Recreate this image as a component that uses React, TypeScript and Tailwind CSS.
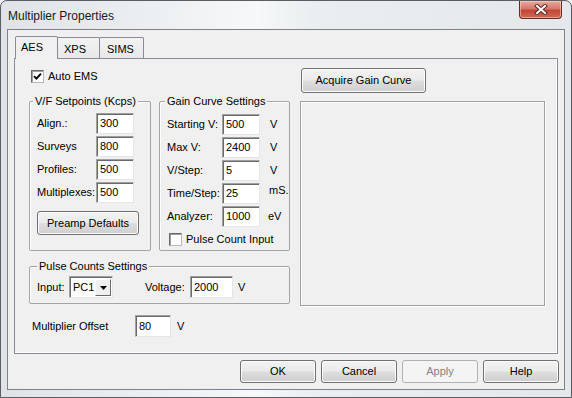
import React from 'react';

function Check({ checked = false }: { checked?: boolean }) {
  return (
    <span className="w-[13px] h-[13px] shrink-0 bg-white border border-t-[#6a6a6a] border-l-[#6a6a6a] border-b-[#b8b8b8] border-r-[#b8b8b8] shadow-[inset_1px_1px_0_#a0a0a0] flex items-center justify-center">
      {checked && (
        <svg width="9" height="9" viewBox="0 0 9 9">
          <path d="M1 4.2 L3.4 6.6 L8 1.6" stroke="#000" strokeWidth="1.9" fill="none" />
        </svg>
      )}
    </span>
  );
}

function TextBox({ value, className = '' }: { value: string; className?: string }) {
  return (
    <div
      className={`bg-white border border-t-[#a0a0a0] border-l-[#a0a0a0] border-b-[#e6e6e6] border-r-[#e6e6e6] shadow-[inset_1px_1px_0_#6a6a6a] pl-[3px] flex items-center ${className}`}
    >
      {value}
    </div>
  );
}

function Btn({
  children,
  className = '',
  disabled = false,
}: {
  children: React.ReactNode;
  className?: string;
  disabled?: boolean;
}) {
  if (disabled) {
    return (
      <button className={`border border-[#adb2b5] rounded-[3px] bg-[#f4f4f4] text-[#838383] flex items-center justify-center ${className}`}>
        {children}
      </button>
    );
  }
  return (
    <button
      className={`border border-[#707070] rounded-[3px] bg-[linear-gradient(#f2f2f2_0%,#ebebeb_48%,#dddddd_52%,#cfcfcf_100%)] shadow-[inset_0_0_0_1px_#fcfcfc] text-black flex items-center justify-center ${className}`}
    >
      {children}
    </button>
  );
}

function Row({ label, value, labelW, unit }: { label: string; value: string; labelW: string; unit?: React.ReactNode }) {
  return (
    <div className="flex items-center h-[21px]">
      <span className={labelW}>{label}</span>
      <TextBox value={value} className="w-[38px] h-[21px]" />
      {unit}
    </div>
  );
}

export default function App() {
  return (
    <div className="w-[572px] h-[398px] overflow-hidden bg-[#f0f0f0]">
      <div className="w-[572px] h-[398px] flex flex-col border border-[#5a5e63] rounded-t-[7px] bg-[linear-gradient(90deg,#dfe3e7_0%,#eef1f3_30%,#f6f8f9_45%,#e9eef0_55%,#e4e8eb_100%)] font-['Liberation_Sans',Arial,sans-serif] text-[11px] leading-[13px] text-black">
        {/* title bar */}
        <div className="h-[28px] flex items-start justify-between shrink-0">
          <span className="text-[12px] leading-[14px] mt-[8px] ml-[7px] text-[#1a1a1a]">Multiplier Properties</span>
          <div className="w-[43px] h-[18px] mr-[9px] rounded-b-[4px] border border-t-0 border-[#6b2a24] bg-[linear-gradient(#e9a99f_0%,#d8776b_45%,#c44536_55%,#d06a58_100%)] shadow-[inset_0_0_0_1px_rgba(255,220,210,0.5)] flex items-center justify-center">
            <svg width="14" height="11" viewBox="0 0 14 11">
              <path d="M3 2 L11 9 M11 2 L3 9" stroke="#5a2b26" strokeWidth="4" strokeLinecap="square" />
              <path d="M3 2 L11 9 M11 2 L3 9" stroke="#fff" strokeWidth="2" strokeLinecap="square" />
            </svg>
          </div>
        </div>

        {/* client area */}
        <div className="ml-[6px] w-[558px] h-[361px] border border-[#7d8288] bg-[#f0f0f0] flex flex-col">
          {/* tabs */}
          <div className="mt-[6px] ml-[7px] flex items-end h-[22px] relative z-10">
            <div className="w-[43px] h-[23px] -mb-px border border-b-0 border-[#898c95] rounded-t-[2px] bg-[#f0f0f0] pl-[5px] pt-[4px]">AES</div>
            <div className="w-[43px] h-[21px] -ml-px border border-b-0 border-[#898c95] rounded-t-[2px] bg-[linear-gradient(#f3f3f3,#e8e8e8)] pl-[6px] pt-[5px]">XPS</div>
            <div className="w-[45px] h-[21px] -ml-px border border-b-0 border-[#898c95] rounded-t-[2px] bg-[linear-gradient(#f3f3f3,#e8e8e8)] pl-[7px] pt-[5px]">SIMS</div>
          </div>

          {/* tab panel */}
          <div className="ml-[6px] w-[544px] h-[296px] border border-[#898c95] shadow-[inset_-1px_-1px_0_#ffffff] bg-[#f0f0f0] flex pt-[9px] pl-[14px]">
            {/* left column */}
            <div className="w-[261px] flex flex-col">
              <div className="h-[16px] flex items-center ml-[2px]">
                <Check checked />
                <span className="ml-[4px]">Auto EMS</span>
              </div>

              <div className="flex mt-[11px]">
                <fieldset className="w-[122px] h-[156px] border border-[#a5a5a5] rounded-[2px] shadow-[inset_1px_1px_0_#ffffff] pl-[7px] pt-[5px] flex flex-col">
                  <legend className="-ml-[4px] px-[2px] bg-[#f0f0f0] leading-[13px]">V/F Setpoints (Kcps)</legend>
                  <div className="flex flex-col gap-[2px]">
                    <Row label="Align.:" value="300" labelW="w-[59px]" />
                    <Row label="Surveys" value="800" labelW="w-[59px]" />
                    <Row label="Profiles:" value="500" labelW="w-[59px]" />
                    <Row label="Multiplexes:" value="500" labelW="w-[59px]" />
                  </div>
                  <Btn className="mt-[8px] w-[102px] h-[24px]">Preamp Defaults</Btn>
                </fieldset>

                <fieldset className="ml-[8px] w-[131px] h-[156px] border border-[#a5a5a5] rounded-[2px] shadow-[inset_1px_1px_0_#ffffff] pl-[7px] pt-[6px] flex flex-col">
                  <legend className="-ml-[2px] px-[2px] bg-[#f0f0f0] leading-[13px]">Gain Curve Settings</legend>
                  <div className="flex flex-col gap-[2px]">
                    <Row label="Starting V:" value="500" labelW="w-[55px]" unit={<span className="ml-[10px]">V</span>} />
                    <Row label="Max V:" value="2400" labelW="w-[55px]" unit={<span className="ml-[10px]">V</span>} />
                    <Row label="V/Step:" value="5" labelW="w-[55px]" unit={<span className="ml-[10px]">V</span>} />
                    <Row label="Time/Step:" value="25" labelW="w-[55px]" unit={<span className="ml-[9px] self-start mt-[1px]">mS.</span>} />
                    <Row label="Analyzer:" value="1000" labelW="w-[55px]" unit={<span className="ml-[8px]">eV</span>} />
                  </div>
                  <div className="mt-[5px] ml-[2px] h-[14px] flex items-center">
                    <Check />
                    <span className="ml-[4px]">Pulse Count Input</span>
                  </div>
                </fieldset>
              </div>

              <fieldset className="mt-[9px] w-[261px] h-[44px] border border-[#a5a5a5] rounded-[2px] shadow-[inset_1px_1px_0_#ffffff] pl-[7px] pt-[3px]">
                <legend className="ml-0 px-[2px] bg-[#f0f0f0] leading-[13px]">Pulse Counts Settings</legend>
                <div className="flex items-center h-[22px]">
                  <span className="w-[32px]">Input:</span>
                  <div className="w-[44px] h-[22px] bg-white border border-t-[#a0a0a0] border-l-[#a0a0a0] border-b-[#e6e6e6] border-r-[#e6e6e6] shadow-[inset_1px_1px_0_#6a6a6a] flex items-center justify-between pl-[3px] pr-[1px]">
                    <span>PC1</span>
                    <span className="w-[16px] h-[17px] mt-[1px] bg-[#f0f0f0] border border-t-white border-l-white border-b-[#696969] border-r-[#696969] flex items-center justify-center">
                      <svg width="7" height="4" viewBox="0 0 7 4">
                        <path d="M0 0 L7 0 L3.5 4 Z" fill="#000" />
                      </svg>
                    </span>
                  </div>
                  <span className="ml-[32px] w-[45px]">Voltage:</span>
                  <TextBox value="2000" className="w-[43px] h-[22px]" />
                  <span className="ml-[5px]">V</span>
                </div>
              </fieldset>

              <div className="mt-[11px] flex items-center h-[22px] pl-[3px]">
                <span className="w-[103px]">Multiplier Offset</span>
                <TextBox value="80" className="w-[36px] h-[22px]" />
                <span className="ml-[6px]">V</span>
              </div>
            </div>

            {/* right column */}
            <div className="ml-[10px] w-[245px] flex flex-col">
              <Btn className="ml-px w-[125px] h-[25px]">Acquire Gain Curve</Btn>
              <div className="mt-[8px] w-[245px] h-[205px] border border-[#a0a0a0] shadow-[inset_1px_1px_0_#ffffff,1px_1px_0_#ffffff] bg-[#f0f0f0]" />
            </div>
          </div>

          {/* bottom buttons */}
          <div className="mt-[6px] flex justify-end gap-[5px] pr-[5px]">
            <Btn className="w-[76px] h-[23px]">OK</Btn>
            <Btn className="w-[76px] h-[23px]">Cancel</Btn>
            <Btn className="w-[76px] h-[23px]" disabled>Apply</Btn>
            <Btn className="w-[76px] h-[23px]">Help</Btn>
          </div>
        </div>
      </div>
    </div>
  );
}
